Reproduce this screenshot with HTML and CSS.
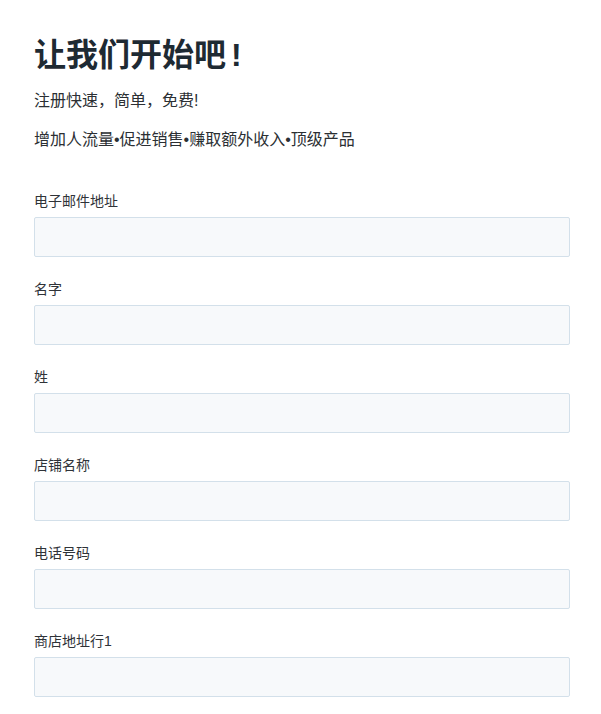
FILE: index.html
```html
<!DOCTYPE html>
<html lang="zh">
<head>
<meta charset="utf-8">
<link rel="stylesheet" href="styles.css">
</head>
<body>
<div class="page">
  <h1 class="title">让我们开始吧<span class="bang">!</span></h1>
  <p class="subtitle">注册快速，简单，免费!</p>
  <p class="features">增加人流量•促进销售•赚取额外收入•顶级产品</p>
  <form class="form">
    <div class="field"><label class="label">电子邮件地址</label><input class="input" type="text"></div>
    <div class="field"><label class="label">名字</label><input class="input" type="text"></div>
    <div class="field"><label class="label">姓</label><input class="input" type="text"></div>
    <div class="field"><label class="label">店铺名称</label><input class="input" type="text"></div>
    <div class="field"><label class="label">电话号码</label><input class="input" type="text"></div>
    <div class="field"><label class="label">商店地址行1</label><input class="input" type="text"></div>
  </form>
</div>
</body>
</html>
```

FILE: styles.css
```css
html, body {
  margin: 0;
  padding: 0;
  background: #ffffff;
}
body {
  font-family: "Liberation Sans", "Noto Sans CJK SC", sans-serif;
  color: #2b2f33;
  overflow: hidden;
}
.page {
  padding: 0 31px 0 34px;
}
.title {
  margin: 35px 0 0;
  font-size: 32px;
  line-height: 40px;
  font-weight: 700;
  color: #1e2a33;
}
.bang {
  margin-left: 5px;
}
.subtitle {
  margin: 14px 0 0;
  font-size: 16px;
  line-height: 24px;
}
.features {
  margin: 15px 0 0;
  font-size: 16px;
  line-height: 24px;
}
.form {
  margin-top: 39px;
  display: flex;
  flex-direction: column;
  gap: 22px;
}
.field {
  display: flex;
  flex-direction: column;
}
.label {
  font-size: 14px;
  line-height: 20px;
  margin-bottom: 6px;
  color: #2f3338;
}
.input {
  box-sizing: border-box;
  height: 40px;
  width: 100%;
  margin: 0;
  border: 1px solid #d3e0ea;
  border-radius: 2px;
  background: #f7f9fb;
}
```
